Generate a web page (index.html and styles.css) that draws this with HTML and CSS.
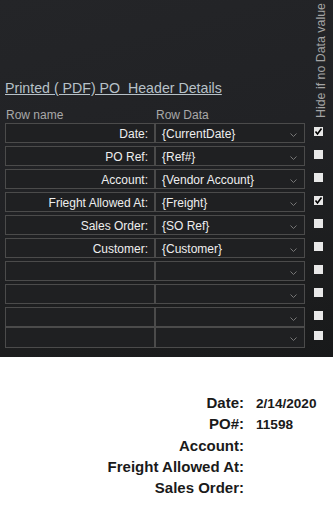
FILE: index.html
```html
<!doctype html>
<html lang="en">
	<head>
		<meta charset="UTF-8" />
		<title>PO Header Details</title>
		<link rel="stylesheet" href="styles.css">
	</head>
	<body>
		<div class="panel">
			<div class="head">
				<div class="head-text">
					<div class="title">Printed ( PDF) PO&nbsp; Header Details</div>
					<div class="cols">
						<span class="col">Row name</span>
						<span class="col">Row Data</span>
					</div>
				</div>
				<div class="vlabel-wrap">
					<span class="vlabel">Hide if no Data value</span>
				</div>
			</div>

			<div class="rows">
				<div class="row">
					<div class="cell name">Date:</div>
					<div class="cell data">{CurrentDate}<svg class="chev" width="7" height="4" viewBox="0 0 7 4"><path d="M0.5 0.5 L3.5 3.5 L6.5 0.5" /></svg></div>
					<div class="check"><span class="box"><svg width="9" height="9" viewBox="0 0 9 9"><path d="M1.5 4.5 L3.5 7 L7.5 1.5" /></svg></span></div>
				</div>
				<div class="row">
					<div class="cell name">PO Ref:</div>
					<div class="cell data">{Ref#}<svg class="chev" width="7" height="4" viewBox="0 0 7 4"><path d="M0.5 0.5 L3.5 3.5 L6.5 0.5" /></svg></div>
					<div class="check"><span class="box"></span></div>
				</div>
				<div class="row">
					<div class="cell name">Account:</div>
					<div class="cell data">{Vendor Account}<svg class="chev" width="7" height="4" viewBox="0 0 7 4"><path d="M0.5 0.5 L3.5 3.5 L6.5 0.5" /></svg></div>
					<div class="check"><span class="box"></span></div>
				</div>
				<div class="row">
					<div class="cell name">Frieght Allowed At:</div>
					<div class="cell data">{Freight}<svg class="chev" width="7" height="4" viewBox="0 0 7 4"><path d="M0.5 0.5 L3.5 3.5 L6.5 0.5" /></svg></div>
					<div class="check"><span class="box"><svg width="9" height="9" viewBox="0 0 9 9"><path d="M1.5 4.5 L3.5 7 L7.5 1.5" /></svg></span></div>
				</div>
				<div class="row">
					<div class="cell name">Sales Order:</div>
					<div class="cell data">{SO Ref}<svg class="chev" width="7" height="4" viewBox="0 0 7 4"><path d="M0.5 0.5 L3.5 3.5 L6.5 0.5" /></svg></div>
					<div class="check"><span class="box"></span></div>
				</div>
				<div class="row">
					<div class="cell name">Customer:</div>
					<div class="cell data">{Customer}<svg class="chev" width="7" height="4" viewBox="0 0 7 4"><path d="M0.5 0.5 L3.5 3.5 L6.5 0.5" /></svg></div>
					<div class="check"><span class="box"></span></div>
				</div>
				<div class="row">
					<div class="cell name"></div>
					<div class="cell data"><svg class="chev" width="7" height="4" viewBox="0 0 7 4"><path d="M0.5 0.5 L3.5 3.5 L6.5 0.5" /></svg></div>
					<div class="check"><span class="box"></span></div>
				</div>
				<div class="row">
					<div class="cell name"></div>
					<div class="cell data"><svg class="chev" width="7" height="4" viewBox="0 0 7 4"><path d="M0.5 0.5 L3.5 3.5 L6.5 0.5" /></svg></div>
					<div class="check"><span class="box"></span></div>
				</div>
				<div class="row">
					<div class="cell name"></div>
					<div class="cell data"><svg class="chev" width="7" height="4" viewBox="0 0 7 4"><path d="M0.5 0.5 L3.5 3.5 L6.5 0.5" /></svg></div>
					<div class="check"><span class="box"></span></div>
				</div>
				<div class="row last">
					<div class="cell name"></div>
					<div class="cell data"><svg class="chev" width="7" height="4" viewBox="0 0 7 4"><path d="M0.5 0.5 L3.5 3.5 L6.5 0.5" /></svg></div>
					<div class="check"><span class="box"></span></div>
				</div>
			</div>
		</div>

		<!-- preview of the printed header -->
		<div class="preview">
			<span class="label">Date:</span><span class="value">2/14/2020</span>
			<span class="label">PO#:</span><span class="value">11598</span>
			<span class="label">Account:</span><span class="value"></span>
			<span class="label">Freight Allowed At:</span><span class="value"></span>
			<span class="label">Sales Order:</span><span class="value"></span>
		</div>
	</body>
</html>
```

FILE: styles.css
```css
* {
	margin: 0;
	padding: 0;
	box-sizing: border-box;
}
body {
	background: #fff;
	font-family: "Liberation Sans", Arial, sans-serif;
}
.panel {
	height: 357px;
	padding-left: 5px;
	background: linear-gradient(165deg, #242528 0%, #212225 45%, #1c1d1e 80%, #18191a 100%);
}
.head {
	display: flex;
	height: 123px;
}
.head-text {
	width: 300px;
	padding-top: 80px;
}
.title {
	font-size: 14.2px;
	line-height: 17px;
	color: #b7c1c8;
	text-decoration: underline;
	white-space: nowrap;
}
.cols {
	display: flex;
	margin-top: 11px;
	font-size: 12px;
	line-height: 14px;
	color: #a9a9a9;
}
.col {
	width: 150px;
	padding-left: 1px;
}
.vlabel-wrap {
	flex: 1;
	padding-left: 10px;
	padding-top: 3px;
}
.vlabel {
	display: inline-block;
	writing-mode: vertical-rl;
	transform: rotate(180deg);
	font-size: 12.4px;
	line-height: 13px;
	color: #a4a4a4;
	white-space: nowrap;
}
.rows {
	display: flex;
	flex-direction: column;
	gap: 3px;
}
.row {
	display: flex;
	height: 20px;
}
.row.last {
	margin-top: -3px;
	height: 21px;
}
.cell {
	width: 150px;
	height: 100%;
	border: 1px solid #4b4b4b;
	background: #1f2022;
	font-size: 12px;
	line-height: 18px;
	padding-top: 1px;
	color: #eee;
	white-space: nowrap;
}
.cell.name {
	text-align: right;
	padding-right: 6px;
}
.cell.data {
	display: flex;
	justify-content: space-between;
	padding-left: 6px;
	padding-right: 7px;
}
.chev {
	align-self: center;
	margin-left: auto;
	margin-top: 2px;
}
.chev path {
	fill: none;
	stroke: #767676;
	stroke-width: 1;
}
.check {
	flex: 1;
	padding-left: 9px;
	padding-top: 4px;
}
.box {
	display: block;
	width: 9px;
	height: 9px;
	background: #e8e8e8;
}
.box svg {
	display: block;
}
.box path {
	fill: none;
	stroke: #000;
	stroke-width: 1.6;
}
.preview {
	display: grid;
	grid-template-columns: 244px auto;
	column-gap: 12px;
	align-items: baseline;
	padding-top: 35px;
	font-size: 15px;
	font-weight: bold;
	line-height: 21.3px;
	color: #1a1a1a;
}
.label {
	text-align: right;
}
.value {
	font-size: 13.6px;
	line-height: 15px;
}
```
